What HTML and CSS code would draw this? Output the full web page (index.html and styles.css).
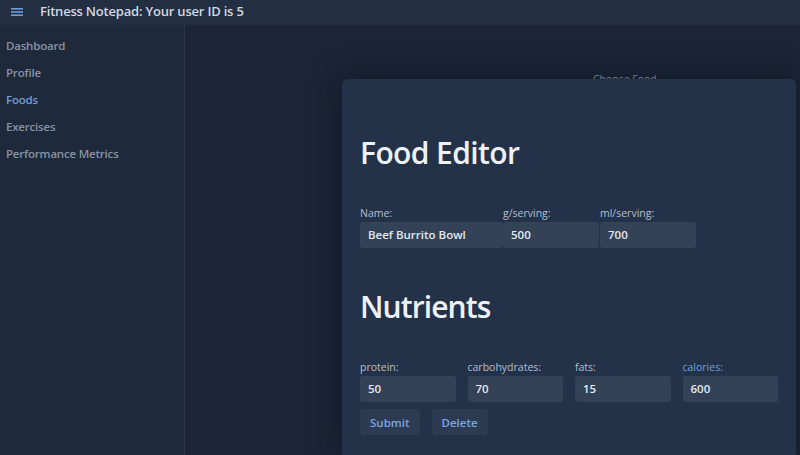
FILE: index.html
```html
<!DOCTYPE html>
<html>
<head>
<meta charset="utf-8">
<link rel="stylesheet" href="styles.css">
</head>
<body>
<header class="topbar">
  <svg class="menu-icon" width="12" height="8" viewBox="0 0 12 8"><rect x="0" y="0" width="12" height="1.6" fill="#6f9fd8"/><rect x="0" y="3.2" width="12" height="1.6" fill="#6f9fd8"/><rect x="0" y="6.4" width="12" height="1.6" fill="#6f9fd8"/></svg>
  <span class="title">Fitness Notepad: Your user ID is 5</span>
</header>
<div class="layout">
  <nav class="sidebar">
    <a class="nav-item">Dashboard</a>
    <a class="nav-item">Profile</a>
    <a class="nav-item active">Foods</a>
    <a class="nav-item">Exercises</a>
    <a class="nav-item">Performance Metrics</a>
  </nav>
  <main class="main">
    <div class="choose">Choose Food</div>
  </main>
</div>
<div class="modal">
  <h1 class="heading">Food Editor</h1>
  <div class="row food-row">
    <div class="field name-field"><label>Name:</label><div class="input">Beef Burrito Bowl</div></div>
    <div class="field small-field"><label>g/serving:</label><div class="input">500</div></div>
    <div class="field small-field"><label>ml/serving:</label><div class="input">700</div></div>
  </div>
  <h1 class="heading nutrients">Nutrients</h1>
  <div class="row nut-row">
    <div class="field nut-field"><label>protein:</label><div class="input">50</div></div>
    <div class="field nut-field"><label>carbohydrates:</label><div class="input">70</div></div>
    <div class="field nut-field"><label>fats:</label><div class="input">15</div></div>
    <div class="field nut-field"><label class="blue">calories:</label><div class="input">600</div></div>
  </div>
  <div class="buttons">
    <button class="btn">Submit</button>
    <button class="btn">Delete</button>
  </div>
</div>
</body>
</html>
```
FILE: styles.css
```css
html, body { margin: 0; padding: 0; height: 100%; overflow: hidden; }
body {
  background: #1c2638;
  font-family: "Open Sans", "Noto Sans", sans-serif;
  color: #cbd5e1;
}
.topbar {
  height: 25px;
  background: #222e41;
  display: flex;
  align-items: center;
  padding-left: 11px;
  box-sizing: border-box;
}
.menu-icon { margin-top: -2px; }
.title {
  margin-left: 17px;
  font-size: 13px;
  font-weight: 600;
  color: #d3d9e2;
  letter-spacing: -0.2px;
  margin-top: -3px;
}
.layout { display: flex; height: calc(100% - 25px); }
.sidebar {
  width: 185px;
  background: #1e293b;
  border-right: 1px solid #2b374a;
  display: flex;
  flex-direction: column;
  padding-top: 13px;
  box-sizing: border-box;
}
.nav-item {
  font-size: 11.5px;
  font-weight: 600;
  color: #8793a5;
  padding-left: 6px;
  height: 27px;
  line-height: 16px;
  letter-spacing: -0.2px;
}
.nav-item.active { color: #6f9fd8; }
.main { flex: 1; position: relative; }
.choose {
  position: absolute;
  left: 408px;
  top: 47px;
  font-size: 10.5px;
  color: #9aa5b6;
}
.modal {
  position: absolute;
  left: 342px;
  top: 79px;
  width: 454px;
  height: 376px;
  background: #243249;
  border-radius: 6px 6px 0 0;
  box-shadow: 0 0 30px 6px rgba(10, 15, 25, 0.45);
  padding: 52px 18px 0 18px;
  box-sizing: border-box;
}
.heading {
  margin: 0;
  font-size: 30px;
  font-weight: 600;
  color: #eef2f7;
  line-height: 44px;
  letter-spacing: -0.6px;
}
.nutrients { letter-spacing: -0.9px; }
.row { display: flex; }
.food-row { margin-top: 31px; }
.field { display: flex; flex-direction: column; }
.field label {
  font-size: 10.5px;
  font-weight: 500;
  color: #b4bfcd;
  height: 16px;
  line-height: 14px;
}
.field label.blue { color: #6f9fd8; }
.input {
  background: #334257;
  border-radius: 3px;
  height: 26px;
  line-height: 26px;
  padding-left: 8px;
  font-size: 11.5px;
  font-weight: 600;
  color: #e3e8ef;
  box-sizing: border-box;
}
.name-field { width: 143px; }
.small-field { width: 96px; }
.food-row .small-field:last-child { margin-left: 1px; }
.nutrients { margin-top: 37px; }
.nut-row { margin-top: 31px; gap: 12px; }
.nut-field { width: 96px; }
.buttons { display: flex; gap: 12px; margin-top: 7px; }
.btn {
  background: #2c3b52;
  border: none;
  border-radius: 3px;
  height: 26px;
  padding: 0 10px;
  font-family: inherit;
  font-size: 11.5px;
  font-weight: 600;
  color: #7aa7e0;
}
```
